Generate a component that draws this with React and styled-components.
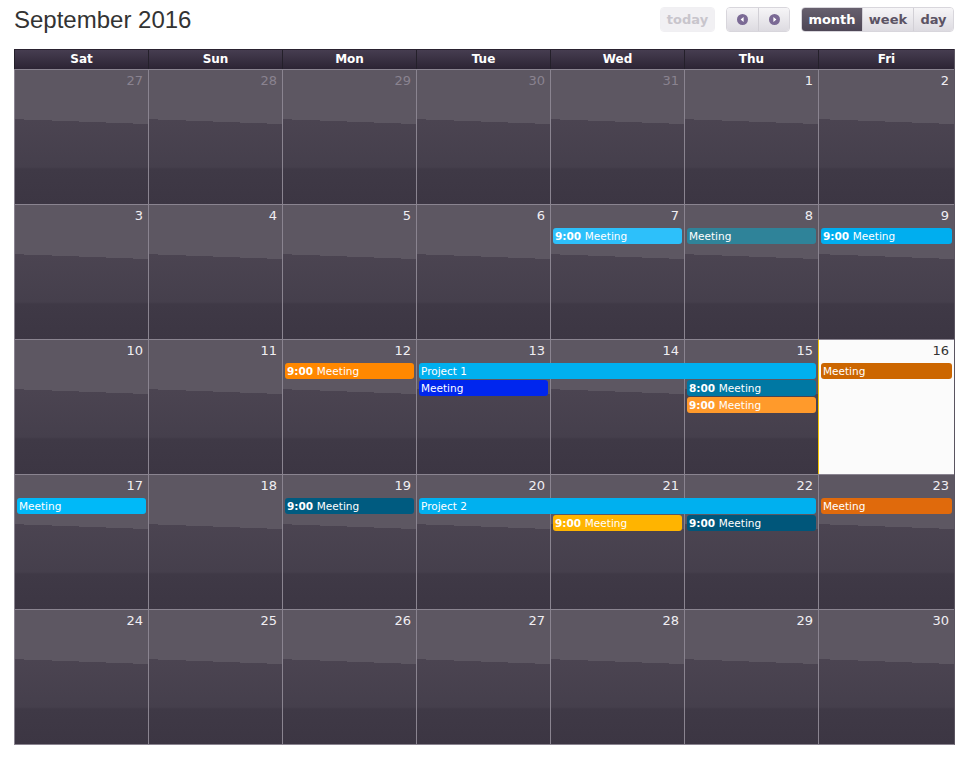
import React from 'react';
import styled, { createGlobalStyle } from 'styled-components';

const GlobalStyle = createGlobalStyle`
  body {
    margin: 0;
    background: #ffffff;
    font-family: "DejaVu Sans", "Liberation Sans", sans-serif;
  }
`;

const Page = styled.div`
  width: 941px;
  padding: 7px 12px 16px 14px;
`;

const Toolbar = styled.div`
  display: flex;
  align-items: center;
  height: 25px;
  margin-bottom: 17px;
`;

const Title = styled.h2`
  margin: 0;
  flex: 1;
  font-family: "Liberation Sans", Arial, sans-serif;
  font-weight: normal;
  font-size: 24px;
  color: #333333;
  line-height: 27px;
`;

const Group = styled.div`
  display: flex;
  height: 25px;
  margin-left: 11px;
  margin-right: ${(p) => p.$end || 0}px;
  border-radius: 4px;
  overflow: hidden;
  border: 1px solid ${(p) => (p.$faded ? '#f0eff2' : '#d8d6dc')};
  box-sizing: border-box;
`;

const Btn = styled.div`
  display: flex;
  align-items: center;
  justify-content: center;
  width: ${(p) => p.$w}px;
  box-sizing: border-box;
  font-size: 13px;
  font-weight: bold;
  border-left: ${(p) => (p.$first ? 'none' : '1px solid #d2d0d6')};
  color: ${(p) => (p.$active ? '#ffffff' : p.$faded ? '#c8c5cc' : '#5b5364')};
  background: ${(p) =>
    p.$active
      ? 'linear-gradient(#67606e, #4d4655)'
      : p.$faded
      ? '#f1f0f3'
      : 'linear-gradient(#f6f5f7, #dddbe1)'};
`;

const Arrow = ({ dir }) => (
  <svg width="11" height="11" viewBox="0 0 11 11">
    <circle cx="5.5" cy="5.5" r="5.5" fill="#7b6a95" />
    {dir === 'left' ? (
      <path d="M6.6 3 L3.6 5.5 L6.6 8 Z" fill="#ffffff" />
    ) : (
      <path d="M4.4 3 L7.4 5.5 L4.4 8 Z" fill="#ffffff" />
    )}
  </svg>
);

const Calendar = styled.div`
  border-right: 1px solid #5a5460;
  border-bottom: 1px solid #8a8490;
`;

const cols = 'repeat(6, 134px) 1fr';

const HeadRow = styled.div`
  display: grid;
  grid-template-columns: ${cols};
  height: 20px;
  background: linear-gradient(#463d50, #2c2434);
  border-top: 1px solid #2a2230;
  box-sizing: border-box;
`;

const HeadCell = styled.div`
  border-left: 1px solid #24202a;
  color: #ffffff;
  font-weight: bold;
  font-size: 12px;
  line-height: 19px;
  text-align: center;
`;

const WeekRow = styled.div`
  display: grid;
  grid-template-columns: ${cols};
  grid-template-rows: 24px 17px 17px 17px 1fr;
  height: 135px;
`;

const DayBg = styled.div`
  grid-column: ${(p) => p.$col};
  grid-row: 1 / -1;
  border-left: 1px solid ${(p) => (p.$today ? '#f5c400' : '#8a8490')};
  border-top: 1px solid #8a8490;
  background: ${(p) =>
    p.$today
      ? '#fbfbfb'
      : `linear-gradient(182.1deg, #5d5762 0, #5d5762 54px, transparent 54px),
         linear-gradient(#4b4451 50px, #453f4c 97px, #3f3946 99px, #3c3643)`};
`;

const DayNum = styled.div`
  grid-column: ${(p) => p.$col};
  grid-row: 1;
  text-align: right;
  padding: 4px 5px 0 0;
  font-size: 13px;
  color: ${(p) => (p.$other ? '#8a8390' : p.$today ? '#333333' : '#f0eef2')};
`;

const Event = styled.div`
  grid-column: ${(p) => p.$col} / span ${(p) => p.$span || 1};
  grid-row: ${(p) => p.$row + 1};
  margin: 0 2px 1px 3px;
  background: ${(p) => p.$color};
  border-radius: 3px;
  color: #ffffff;
  font-size: 10.5px;
  line-height: 16px;
  padding-left: 2px;
  white-space: nowrap;
  overflow: hidden;
  b {
    font-weight: bold;
  }
`;

const days = ['Sat', 'Sun', 'Mon', 'Tue', 'Wed', 'Thu', 'Fri'];

const weeks = [
  {
    nums: [27, 28, 29, 30, 31, 1, 2],
    other: 5,
    events: [],
  },
  {
    nums: [3, 4, 5, 6, 7, 8, 9],
    events: [
      { col: 5, row: 1, time: '9:00', title: 'Meeting', color: '#2dc0fa' },
      { col: 6, row: 1, title: 'Meeting', color: '#2f8399' },
      { col: 7, row: 1, time: '9:00', title: 'Meeting', color: '#00aeef' },
    ],
  },
  {
    nums: [10, 11, 12, 13, 14, 15, 16],
    today: 7,
    events: [
      { col: 3, row: 1, time: '9:00', title: 'Meeting', color: '#ff8800' },
      { col: 4, span: 3, row: 1, title: 'Project 1', color: '#00b0ef' },
      { col: 4, row: 2, title: 'Meeting', color: '#0026ee' },
      { col: 6, row: 2, time: '8:00', title: 'Meeting', color: '#0078a3' },
      { col: 6, row: 3, time: '9:00', title: 'Meeting', color: '#ff9a2b' },
      { col: 7, row: 1, title: 'Meeting', color: '#cc6600' },
    ],
  },
  {
    nums: [17, 18, 19, 20, 21, 22, 23],
    events: [
      { col: 1, row: 1, title: 'Meeting', color: '#00b9f8' },
      { col: 3, row: 1, time: '9:00', title: 'Meeting', color: '#005b80' },
      { col: 4, span: 3, row: 1, title: 'Project 2', color: '#00b0ef' },
      { col: 5, row: 2, time: '9:00', title: 'Meeting', color: '#ffb400' },
      { col: 6, row: 2, time: '9:00', title: 'Meeting', color: '#00567a' },
      { col: 7, row: 1, title: 'Meeting', color: '#e06a0c' },
    ],
  },
  {
    nums: [24, 25, 26, 27, 28, 29, 30],
    events: [],
  },
];

export default function App() {
  return (
    <>
      <GlobalStyle />
      <Page>
        <Toolbar>
          <Title>September 2016</Title>
          <Group $faded>
            <Btn $w={53} $first $faded>today</Btn>
          </Group>
          <Group>
            <Btn $w={31} $first>
              <Arrow dir="left" />
            </Btn>
            <Btn $w={31}>
              <Arrow dir="right" />
            </Btn>
          </Group>
          <Group $end={1}>
            <Btn $w={60} $first $active>month</Btn>
            <Btn $w={51}>week</Btn>
            <Btn $w={40}>day</Btn>
          </Group>
        </Toolbar>
        <Calendar>
          <HeadRow>
            {days.map((d) => (
              <HeadCell key={d}>{d}</HeadCell>
            ))}
          </HeadRow>
          {weeks.map((w, wi) => (
            <WeekRow key={wi}>
              {w.nums.map((n, i) => (
                <DayBg key={'b' + i} $col={i + 1} $today={w.today === i + 1} />
              ))}
              {w.nums.map((n, i) => (
                <DayNum
                  key={'n' + i}
                  $col={i + 1}
                  $other={w.other && i < w.other}
                  $today={w.today === i + 1}
                >
                  {n}
                </DayNum>
              ))}
              {w.events.map((e, ei) => (
                <Event key={ei} $col={e.col} $span={e.span} $row={e.row} $color={e.color}>
                  {e.time && <b>{e.time} </b>}
                  {e.title}
                </Event>
              ))}
            </WeekRow>
          ))}
        </Calendar>
      </Page>
    </>
  );
}
